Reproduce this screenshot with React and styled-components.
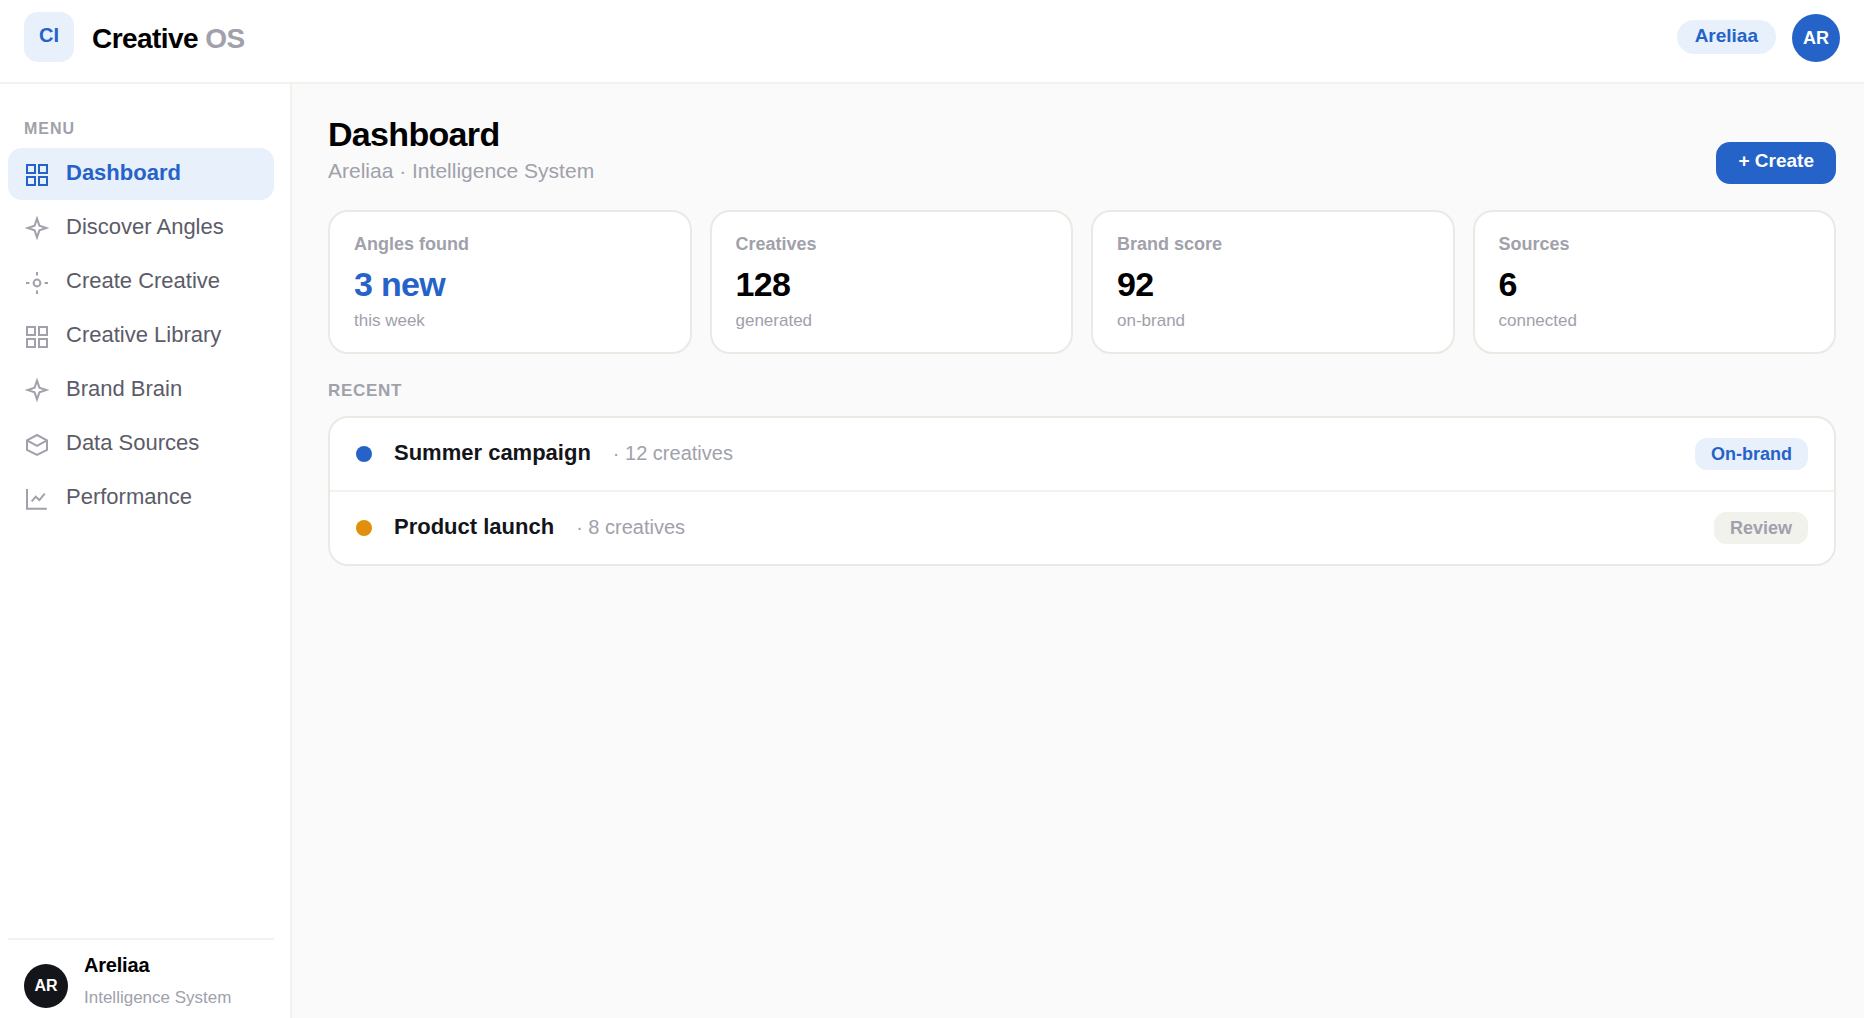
import React from "react";
import styled, { createGlobalStyle } from "styled-components";

const color = {
  blue: "#2563c9",
  pale: "#e8f0fc",
  ink: "#14151a",
  body: "#5b5c68",
  muted: "#a0a1ab",
  line: "#f2f2ed",
  cardLine: "#ece9e4",
  amber: "#e0900c",
  page: "#fafafa",
};

const GlobalStyle = createGlobalStyle`
  *, *::before, *::after { box-sizing: border-box; }
  body {
    margin: 0;
    background: ${color.page};
    color: #000;
    font-family: "Liberation Sans", Arial, sans-serif;
  }
  h1, h2, p, ul, dl, dd { margin: 0; padding: 0; }
  ul { list-style: none; }
`;

const Shell = styled.div`
  display: flex;
  flex-direction: column;
  min-height: 100vh;
`;

const TopBar = styled.header`
  display: flex;
  justify-content: space-between;
  padding: 12px 24px 20px;
  background: #fff;
  border-bottom: 2px solid ${color.line};
`;

const Brand = styled.div`
  display: flex;
  gap: 18px;
`;

const LogoTile = styled.div`
  width: 50px;
  height: 50px;
  padding-bottom: 4px;
  display: grid;
  place-items: center;
  border-radius: 14px;
  background: ${color.pale};
  color: ${color.blue};
  font-size: 20px;
  font-weight: 700;
`;

const BrandName = styled.div`
  align-self: flex-end;
  font-size: 28px;
  line-height: 46px;
  font-weight: 700;
  letter-spacing: -0.02em;

  span { color: ${color.muted}; }
`;

const Account = styled.div`
  display: flex;
  align-items: center;
  gap: 16px;
`;

const WorkspacePill = styled.button`
  border: 0;
  border-radius: 17px;
  padding: 4px 18px 6px;
  background: ${color.pale};
  color: ${color.blue};
  font: 700 19px/24px "Liberation Sans", Arial, sans-serif;
`;

const Avatar = styled.div`
  flex: none;
  align-self: flex-end;
  display: grid;
  place-items: center;
  width: ${(p) => p.$size}px;
  height: ${(p) => p.$size}px;
  border-radius: 50%;
  background: ${(p) => p.$fill};
  color: #fff;
  font-size: ${(p) => p.$text}px;
  font-weight: 700;
`;

const Body = styled.div`
  flex: 1;
  display: flex;
`;

const Sidebar = styled.aside`
  flex: none;
  display: flex;
  flex-direction: column;
  justify-content: space-between;
  width: 292px;
  padding: 34px 16px 0 8px;
  background: #fff;
  border-right: 2px solid ${color.line};
`;

const SectionLabel = styled.h2`
  color: ${color.muted};
  font-size: ${(p) => p.$text}px;
  line-height: 22px;
  font-weight: 700;
  letter-spacing: ${(p) => p.$tracking};
`;

const MenuHead = styled.div`
  padding: 0 16px 8px;
`;

const NavList = styled.ul`
  display: grid;
  gap: 2px;
`;

const NavLink = styled.a`
  display: flex;
  gap: 16px;
  padding: 12px 16px;
  border-radius: 14px;
  background: ${(p) => (p.$active ? color.pale : "transparent")};
  color: ${(p) => (p.$active ? color.blue : color.body)};
  font-size: 22px;
  line-height: 26px;
  font-weight: ${(p) => (p.$active ? 700 : 400)};
  text-decoration: none;

  svg {
    flex: none;
    width: 26px;
    height: 26px;
    margin-top: 2px;
    color: ${(p) => (p.$active ? color.blue : color.muted)};
  }
`;

const Profile = styled.div`
  display: flex;
  gap: 16px;
  padding: 12px 16px 10px;
  border-top: 2px solid ${color.line};
`;

const ProfileText = styled.div`
  display: grid;
  gap: 10px;
`;

const ProfileName = styled.div`
  font-size: 20px;
  line-height: 26px;
  font-weight: 700;
  letter-spacing: -0.01em;
`;

const ProfileRole = styled.div`
  color: ${color.muted};
  font-size: 17px;
  line-height: 20px;
`;

const Main = styled.main`
  flex: 1;
  min-width: 0;
  padding: 30px 28px 30px 36px;
`;

const PageHead = styled.div`
  display: flex;
  justify-content: space-between;
  align-items: flex-end;
  margin-bottom: 26px;
`;

const PageTitle = styled.h1`
  font-size: 34px;
  line-height: 40px;
  font-weight: 700;
  letter-spacing: -0.02em;
`;

const PageSubtitle = styled.p`
  margin-top: 4px;
  color: ${color.muted};
  font-size: 21px;
  line-height: 26px;
`;

const CreateButton = styled.button`
  border: 0;
  border-radius: 14px;
  padding: 7px 22px 11px;
  background: ${color.blue};
  color: #fff;
  font: 700 19px/24px "Liberation Sans", Arial, sans-serif;
`;

const Stats = styled.dl`
  display: grid;
  grid-template-columns: repeat(4, 1fr);
  gap: 18px;
  margin-bottom: 26px;
`;

const StatCard = styled.div`
  padding: 20px 24px 20px;
  background: #fff;
  border: 2px solid ${color.cardLine};
  border-radius: 20px;
`;

const StatLabel = styled.dt`
  color: ${color.muted};
  font-size: 18px;
  line-height: 24px;
  font-weight: 700;
`;

const StatValue = styled.dd`
  && { margin: 8px 0 6px; }
  color: ${(p) => (p.$accent ? color.blue : "#000")};
  font-size: 34px;
  line-height: 40px;
  font-weight: 700;
  letter-spacing: -0.02em;
`;

const StatNote = styled.dd`
  color: ${color.muted};
  font-size: 17px;
  line-height: 22px;
`;

const RecentList = styled.ul`
  && { margin-top: 14px; }
  background: #fff;
  border: 2px solid ${color.cardLine};
  border-radius: 20px;
`;

const RecentRow = styled.li`
  display: flex;
  align-items: center;
  gap: 22px;
  padding: 20px 26px;

  & + & { border-top: 2px solid ${color.line}; }
`;

const Dot = styled.span`
  width: 16px;
  height: 16px;
  border-radius: 50%;
  background: ${(p) => p.$fill};
`;

const RowText = styled.div`
  flex: 1;
  display: flex;
  align-items: baseline;
  gap: 22px;
  padding-bottom: 2px;
  line-height: 24px;
`;

const RowName = styled.span`
  color: ${color.ink};
  font-size: 22px;
  font-weight: 700;
`;

const RowMeta = styled.span`
  color: ${color.muted};
  font-size: 20px;
`;

const Tag = styled.span`
  padding: 4px 16px;
  border-radius: 12px;
  background: ${(p) => (p.$positive ? color.pale : color.line)};
  color: ${(p) => (p.$positive ? color.blue : color.muted)};
  font-size: 18px;
  line-height: 24px;
  font-weight: 700;
`;

const Icon = ({ children }) => (
  <svg viewBox="0 0 26 26" fill="none" stroke="currentColor" strokeWidth="2" aria-hidden="true">
    {children}
  </svg>
);

const GridIcon = () => (
  <Icon>
    <rect x="3" y="3" width="8" height="8" />
    <rect x="15" y="3" width="8" height="8" />
    <rect x="3" y="15" width="8" height="8" />
    <rect x="15" y="15" width="8" height="8" />
  </Icon>
);

const SparkIcon = () => (
  <Icon>
    <path d="M13 2.6l2.4 7 7 2.4-7 2.4L13 21.4l-2.4-7-7-2.4 7-2.4z" />
  </Icon>
);

const TargetIcon = () => (
  <Icon>
    <circle cx="13" cy="13" r="3.4" />
    <path d="M13 2v3.4M13 20.6V24M2 13h3.4M20.6 13H24" />
  </Icon>
);

const BoxIcon = () => (
  <Icon>
    <path d="M13 3l10 5.3v9.6L13 23 3 17.9V8.3z" />
    <path d="M3 8.3l10 5.5 10-5.5" />
  </Icon>
);

const ChartIcon = () => (
  <Icon>
    <path d="M3 3v19.8h19.8" />
    <path d="M7.7 15.3l4-4.6 3.7 3.4 5.3-6.4" />
  </Icon>
);

const navItems = [
  { label: "Dashboard", icon: GridIcon, active: true },
  { label: "Discover Angles", icon: SparkIcon },
  { label: "Create Creative", icon: TargetIcon },
  { label: "Creative Library", icon: GridIcon },
  { label: "Brand Brain", icon: SparkIcon },
  { label: "Data Sources", icon: BoxIcon },
  { label: "Performance", icon: ChartIcon },
];

const stats = [
  { label: "Angles found", value: "3 new", note: "this week", accent: true },
  { label: "Creatives", value: "128", note: "generated" },
  { label: "Brand score", value: "92", note: "on-brand" },
  { label: "Sources", value: "6", note: "connected" },
];

const recent = [
  { name: "Summer campaign", meta: "· 12 creatives", tag: "On-brand", positive: true, dot: color.blue },
  { name: "Product launch", meta: "· 8 creatives", tag: "Review", positive: false, dot: color.amber },
];

export default function App() {
  return (
    <Shell>
      <GlobalStyle />
      <TopBar>
        <Brand>
          <LogoTile>CI</LogoTile>
          <BrandName>
            Creative <span>OS</span>
          </BrandName>
        </Brand>
        <Account>
          <WorkspacePill type="button">Areliaa</WorkspacePill>
          <Avatar $size={48} $text={18} $fill={color.blue}>AR</Avatar>
        </Account>
      </TopBar>
      <Body>
        <Sidebar>
          <nav>
            <MenuHead>
              <SectionLabel $text={16} $tracking="0.06em">MENU</SectionLabel>
            </MenuHead>
            <NavList>
              {navItems.map(({ label, icon: Glyph, active }) => (
                <li key={label}>
                  <NavLink href="#" $active={active} aria-current={active ? "page" : undefined}>
                    <Glyph />
                    <span>{label}</span>
                  </NavLink>
                </li>
              ))}
            </NavList>
          </nav>
          <Profile>
            <Avatar $size={44} $text={16} $fill={color.ink}>AR</Avatar>
            <ProfileText>
              <ProfileName>Areliaa</ProfileName>
              <ProfileRole>Intelligence System</ProfileRole>
            </ProfileText>
          </Profile>
        </Sidebar>
        <Main>
          <PageHead>
            <div>
              <PageTitle>Dashboard</PageTitle>
              <PageSubtitle>Areliaa · Intelligence System</PageSubtitle>
            </div>
            <CreateButton type="button">+ Create</CreateButton>
          </PageHead>
          <Stats>
            {stats.map((s) => (
              <StatCard key={s.label}>
                <StatLabel>{s.label}</StatLabel>
                <StatValue $accent={s.accent}>{s.value}</StatValue>
                <StatNote>{s.note}</StatNote>
              </StatCard>
            ))}
          </Stats>
          <section>
            <SectionLabel $text={17} $tracking="0.04em">RECENT</SectionLabel>
            <RecentList>
              {recent.map((r) => (
                <RecentRow key={r.name}>
                  <Dot $fill={r.dot} />
                  <RowText>
                    <RowName>{r.name}</RowName>
                    <RowMeta>{r.meta}</RowMeta>
                  </RowText>
                  <Tag $positive={r.positive}>{r.tag}</Tag>
                </RecentRow>
              ))}
            </RecentList>
          </section>
        </Main>
      </Body>
    </Shell>
  );
}
